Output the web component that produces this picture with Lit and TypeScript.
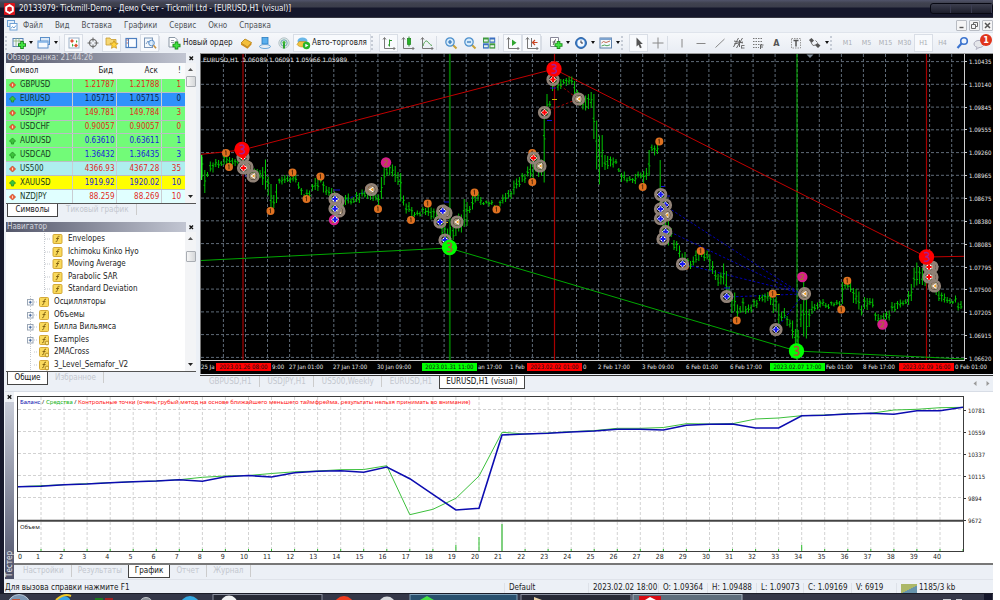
import { LitElement, html, svg, css, nothing } from "lit";
import { customElement, state } from "lit/decorators.js";

/* ---------- price chart data ---------- */

// x, high, low of the price swings (plot units)
const SWINGS: number[][] = [
  [202,158,178],[204,170,193],[208,171,176],[212,162,172],[216,160,168],[222,160,165],[226,154,165],[232,158,165],[237,158,165],
  [243,150,162],[247,160,172],[252,168,178],[258,170,178],[262,166,184],[265,160,190],[268,176,195],[270,185,210],[273,195,208],
  [276,183,202],[279,179,184],[284,176,184],[290,176,182],[294,174,182],[298,183,190],[301,188,195],[304,193,200],[309,190,197],
  [313,185,192],[316,178,190],[320,176,183],[323,181,192],[327,187,196],[331,187,212],[335,192,215],[338,196,215],[342,200,207],
  [347,194,204],[354,198,204],[358,192,202],[362,190,197],[368,192,200],[372,186,200],[376,195,201],[378,194,208],[381,178,200],
  [384,164,185],[387,164,175],[391,164,176],[394,167,183],[398,172,185],[401,172,200],[404,196,206],[408,203,213],[411,207,218],
  [415,211,216],[420,211,216],[424,208,215],[428,205,215],[431,208,220],[434,208,218],[437,212,222],[440,213,228],[443,222,235],
  [446,225,238],[449,228,247],[452,224,240],[456,222,235],[460,214,232],[463,200,228],[466,202,226],[469,205,212],[472,195,210],
  [476,193,202],[480,197,205],[484,201,204],[490,201,206],[496,205,209],[500,201,207],[505,194,203],[510,190,198],[514,181,195],
  [519,178,188],[523,173,182],[527,167,177],[530,163,177],[532,154,182],[536,155,172],[540,160,176],[543,115,182],[546,95,118],
  [549,101,107],[551,103,108],[554,72,90],[556,78,85],[560,80,90],[564,79,84],[568,77,85],[572,76,84],[575,82,98],[578,90,97],
  [581,95,105],[584,98,110],[587,95,110],[590,92,108],[593,93,138],[596,121,170],[599,135,184],[602,136,168],[605,155,170],
  [608,155,168],[612,157,167],[616,160,165],[620,168,172],[623,172,181],[628,177,182],[632,178,183],[636,173,183],[640,172,178],
  [643,172,187],[646,168,180],[649,149,175],[653,145,152],[656,145,155],[659,140,160],[661,160,215],[664,195,235],[668,218,245],
  [671,229,238],[675,240,250],[679,246,258],[683,253,268],[687,258,265],[691,260,268],[694,257,266],[698,250,262],[702,250,257],
  [706,251,260],[710,254,270],[713,262,275],[716,270,280],[719,273,285],[723,263,284],[727,272,298],[730,286,300],[733,293,312],
  [737,304,318],[740,307,314],[743,298,312],[747,305,313],[751,304,312],[755,300,308],[759,294,300],[763,295,302],[767,293,302],
  [771,290,305],[775,297,312],[778,303,327],[781,313,322],[784,308,318],[787,315,325],[790,320,328],[793,320,338],[797,330,350],
  [800,303,326],[803,280,337],[806,292,338],[808,310,328],[811,301,314],[815,303,310],[820,300,307],[826,303,308],[832,302,306],
  [838,301,306],[842,281,303],[845,278,290],[848,282,288],[851,283,293],[855,288,303],[859,292,310],[862,305,315],[866,298,310],
  [869,297,304],[873,299,308],[876,312,320],[880,315,325],[886,312,320],[890,310,320],[893,303,312],[898,300,308],[904,300,305],
  [908,291,305],[911,283,300],[915,268,288],[918,262,285],[921,268,285],[925,260,285],[928,260,282],[932,275,290],[936,280,295],
  [939,290,300],[943,293,302],[948,298,304],[952,300,303],[956,296,303],[960,302,310],[964,307,315],
];
const PX = 201, PW = 763;

function barsPath(): string {
  let d = "";
  let s = 0;
  const n = Math.floor((PW - 2) / 2.76);
  for (let i = 0; i <= n; i++) {
    const x = PX + 1 + i * 2.76;
    while (s < SWINGS.length - 2 && SWINGS[s + 1][0] < x) s++;
    const a = SWINGS[s], b = SWINGS[s + 1];
    const near = Math.abs(a[0] - x) <= Math.abs(b[0] - x) ? a : b;
    const j = ((i * 7) % 5) - 2;
    const hi = near[1] + j * 0.5, lo = near[2] + j * 0.5;
    const rx = x.toFixed(1);
    const o = hi + (lo - hi) * (0.3 + ((i * 3) % 4) * 0.12);
    const c = hi + (lo - hi) * (0.35 + ((i * 5) % 4) * 0.13);
    d += `M${rx} ${hi.toFixed(1)}V${lo.toFixed(1)}M${(x - 1.3).toFixed(1)} ${o.toFixed(1)}H${rx}M${rx} ${c.toFixed(1)}h1.3`;
  }
  return d;
}
const BARS = barsPath();

const ORANGE = [[226,153],[229,167],[270.5,211],[292.5,172.5],[306.5,199],[320.5,176.5],[369,189],[378,209],[411,220],[427.7,203.5],
  [474.5,192.5],[496.5,209.5],[532.3,153],[532.3,182],[642.7,187],[659.3,141.5],[685,266],[700.7,251],[736.7,320.5],[772.7,293.7],
  [841.3,309.5],[847.3,280.7]];
const PINK = [[386,162.5],[334,220],[802.3,277],[882.5,324.5]];
const DEALS: [number, number, string][] = [
  [243,157,"r"],[247,167,"o"],[243.5,168,"r"],[253,176,"o"],[338,201,"o"],[335,199,"b"],[339,211,"o"],[335,208.7,"b"],[335,219.5,"p"],
  [371.5,189.5,"o"],[446,213,"o"],[442.7,211,"b"],[440,222,"b"],[457,222,"o"],[445,240,"b"],
  [553,79.5,"r"],[578.5,99,"o"],[544.5,112.5,"r"],[533.5,158,"r"],[540,166,"o"],[660.7,194.5,"b"],[666.5,215,"o"],[665.5,205,"b"],
  [660.5,209,"b"],[660.5,218.7,"b"],[665.7,231.7,"b"],[663,239,"b"],[682.5,264,"b"],[726.7,296.5,"b"],[776,329.5,"b"],
  [804.5,293.7,"o"],[932,267,"o"],[929,267,"r"],[932,277,"o"],[929,277,"r"],[934.5,286,"o"]];
const PEAKS: [number, number, string][] = [[242,149.5,"#f00"],[554,69,"#f00"],[926.5,257,"#f00"],[449.5,247.5,"#0f0"],[796.5,351,"#0f0"]];

const PRICES = ["1.10435","1.10140","1.09845","1.09555","1.09260","1.08965","1.08675","1.08380","1.08085","1.07795","1.07500","1.07205","1.06915","1.06620"];
// axis captions; those beside a date flag carry only the part that stays free
const TIMES: [number, string][] = [[201,"25 Ja"],[272,"9:00"],[289,"27 Jan 01:00"],[333,"27 Jan 17:00"],[377,"30 Jan 09:00"],[478,"an 17:00"],[510,"1 Feb"],[583,"0"],[598,"2 Feb 17:00"],[642,"3 Feb 09:00"],[686,"6 Feb 01:00"],[730,"6 Feb 17:00"],[826,"Feb 01:00"],[863,"8 Feb 17:00"],[955,"0 Feb 01:00"]];
const FLAGS: [number, string, string][] = [[216,"2023.01.26 08:00","red"],[422,"2023.01.31 11:00","green"],[527,"2023.02.02 01:00","red"],[770,"2023.02.07 17:00","green"],[899,"2023.02.09 16:00","red"]];

/* ---------- tester data ---------- */
const BALANCE = [486.7,486.3,484.7,484,482.7,481.7,481,479.7,481.3,476.7,475.5,477,472.7,471.3,470.7,472.3,467,478.7,494.3,510,508.3,435,434,433.3,432,431,429.3,429.2,430,425.3,424.3,424,428,428,415.7,415.3,414,413.3,414.3,410.7,410.7,407.3];
const EQUITY = [486.7,485.7,484.7,483.7,482.7,481.7,481,479.7,477.3,476,475.5,473.5,471.8,471,469.7,469.5,465.7,514.7,509.3,498.3,476,432.3,434,433,431.6,430.6,428.3,428.3,427.5,423.7,424,423.7,419,418,415.7,415,413.8,413.3,410,409.3,407.7,407.3];
const VOLUME: Record<number, number> = { 19: 6, 20: 14, 21: 27, 34: 6 };

/* ---------- icons (18 x 16 boxes) ---------- */
const plus = (x: number, y: number) => svg`<path d="M${x} ${y - 4}v8M${x - 4} ${y}h8" stroke="#1c8a1c" stroke-width="3.6"/><path d="M${x} ${y - 3}v6M${x - 3} ${y}h6" stroke="#3fe03f" stroke-width="2"/>`;
const axes = svg`<path d="M4.500 3v10.500H15M3 4.500l1.500-2 1.500 2M13.500 12l1.500 1.500-1.500 1.500" fill="none" stroke="#777" stroke-width="1"/>`;
const ICONS: Record<string, unknown> = {
  newchart: svg`<rect x="3" y="3.500" width="10" height="8" fill="#eef5fb" stroke="#5b83b5"/><path d="M3 6h10M6 3v9M9 3v9" stroke="#8ab07a" stroke-width=".8"/>${plus(12, 10)}`,
  profiles: svg`<rect x="5.500" y="2.500" width="9" height="7" fill="#dbe9f8" stroke="#5b8fc9"/><rect x="3" y="6" width="10" height="7" fill="#f5faff" stroke="#5b8fc9"/><path d="M3 7h10" stroke="#7fb0e6" stroke-width="1.500"/>`,
  watch: svg`<rect x="4" y="3" width="10" height="10" fill="#fff" stroke="#9bb0c8"/><path d="M7 4l2 2-2 2-2-2zM11 8.500l2 2-2 2-2-2z" fill="#e05030"/><path d="M7 8.500l1.700 1.700L7 12M11 5l1.500 1.500L11 8" fill="#38b038"/>`,
  target: svg`<circle cx="9" cy="8" r="3.600" fill="none" stroke="#777" stroke-width="1.200"/><path d="M9 2.500v4M9 9.500v4M3.500 8h4M10.500 8h4" stroke="#666"/>`,
  nav: svg`<path d="M3 3h4l1 1.500h5V10H3z" fill="#f6d774" stroke="#c59b2e" stroke-width=".8"/><path d="M11 5.500l1.200 2.600 2.800.3-2 2 .5 2.900-2.500-1.400-2.500 1.400.5-2.900-2-2 2.800-.3z" fill="#ffd23c" stroke="#c08d12" stroke-width=".7"/>`,
  terminal: svg`<rect x="4" y="3.500" width="10.500" height="9" fill="#fbfdff" stroke="#4d7fc0" stroke-width="1.200"/><path d="M6.500 4v8" stroke="#4d7fc0"/><path d="M4.500 5h2M4.500 8h1.500" stroke="#d05040" stroke-width=".8"/>`,
  tester: svg`<rect x="3.500" y="3" width="8" height="9.500" fill="#f4f8fc" stroke="#7d97b8"/><path d="M5 9l2-3 1.500 2L10 5" fill="none" stroke="#5b83b5" stroke-width=".8"/><circle cx="10.500" cy="8" r="2.800" fill="#d9ecfb" fill-opacity=".8" stroke="#5b8fc9"/><path d="M12.500 10.200l2.500 3" stroke="#c59040" stroke-width="1.600"/>`,
  order: svg`<path d="M4 2.500h6l2 2V12H4z" fill="#fff" stroke="#8a97a5"/><path d="M6 5.500h3M6 7.500h3" stroke="#7d8a98" stroke-width=".8"/>${plus(11.5, 10.5)}`,
  gold: svg`<path d="M4 8l4-4 6.500 3.500-4 4.500z" fill="#f3bf3a" stroke="#b07d10" stroke-width=".8"/><path d="M4 8v1.800l6.500 4V12zM14.500 7.500v2l-4 4.300V12z" fill="#cf8d18"/>`,
  account: svg`<rect x="6" y="2.500" width="6" height="6.500" fill="#5ab0ee" stroke="#2a7dc0" stroke-width=".8"/><ellipse cx="9" cy="11.500" rx="5.500" ry="2" fill="#e7edf3" stroke="#5b9fd6" stroke-width=".9"/>`,
  signal: svg`<circle cx="9" cy="8" r="5.200" fill="#dfe8e4" stroke="#b7c6cb"/><circle cx="9" cy="8" r="3.200" fill="none" stroke="#6fa9b8"/><path d="M9 8v5.500" stroke="#2da52d" stroke-width="2"/><circle cx="9" cy="7.500" r="1.500" fill="#38b838"/>`,
  auto: svg`<ellipse cx="8.500" cy="6" rx="5" ry="3.500" fill="#69b7e8"/><path d="M3 9.500c2 3 8 3.500 11 0l-2-3H5z" fill="#f1c33f" stroke="#bb8d1e" stroke-width=".6"/><circle cx="12.500" cy="10.500" r="3.700" fill="#28b428"/><path d="M11.300 8.700l3.200 1.800-3.200 1.800z" fill="#fff"/>`,
  bars: svg`${axes}<path d="M9.500 4.500v7M8 10h1.500M9.500 5.500H12" fill="none" stroke="#2c9a2c"/>`,
  candles: svg`${axes}<path d="M10 1.500v10" stroke="#2c8a2c"/><rect x="8.300" y="3.500" width="3.400" height="6" fill="#27b227" stroke="#1a7d1a" stroke-width=".6"/>`,
  line: svg`${axes}<path d="M5 11c1-4 3-6 4.500-4.500S12 10 14 10.500" fill="none" stroke="#4aa04a"/>`,
  zin: svg`<path d="M10.500 9.500l4 4" stroke="#c8a23a" stroke-width="2"/><circle cx="8" cy="7" r="4.200" fill="#d5ebfb" stroke="#4b8ecb" stroke-width="1.200"/><path d="M8 5v4M6 7h4" stroke="#2a6fb5" stroke-width="1.200"/>`,
  zout: svg`<path d="M10.500 9.500l4 4" stroke="#c8a23a" stroke-width="2"/><circle cx="8" cy="7" r="4.200" fill="#d5ebfb" stroke="#4b8ecb" stroke-width="1.200"/><path d="M6 7h4" stroke="#2a6fb5" stroke-width="1.200"/>`,
  tile: svg`<rect x="3" y="2.500" width="5.800" height="5.300" fill="#3f9a3f"/><rect x="9.400" y="2.500" width="5.800" height="5.300" fill="#3a6fc0"/><rect x="3" y="8.300" width="5.800" height="5.300" fill="#3a6fc0"/><rect x="9.400" y="8.300" width="5.800" height="5.300" fill="#3f9a3f"/><path d="M4 5.500h3.800M10.400 5.500h3.800M4 11.300h3.800M10.400 11.300h3.800" stroke="#e9f4e9" stroke-width="2"/>`,
  shift: svg`${axes}<path d="M8 4.500l4.500 3.300L8 11z" fill="#2fa52f"/>`,
  scroll: svg`${axes}<path d="M8.500 3v9" stroke="#777"/><path d="M14.500 7.500h-5M12 5l-2.500 2.500L12 10" fill="none" stroke="#cc4422" stroke-width="1.200"/>`,
  indic: svg`<path d="M3.500 2.500h8v9h-8z" fill="#fff" stroke="#889"/><path d="M6 10c1 0 1-5.500 3-5.500M5.500 7h3" fill="none" stroke="#555"/>${plus(11.5, 10)}`,
  clock: svg`<circle cx="9" cy="8" r="5.400" fill="#3a7fcf" stroke="#245a9c"/><circle cx="9" cy="8" r="3.700" fill="#f3f9ff"/><path d="M9 5.500V8h2" fill="none" stroke="#334"/>`,
  template: svg`<rect x="3" y="3" width="11.500" height="10" fill="#f5f9fd" stroke="#5d7fa8"/><path d="M3 4h11.500" stroke="#7da3cf" stroke-width="2"/><path d="M4.500 8l2-1.500 2.500 1 4-1.500" fill="none" stroke="#c05a40" stroke-width=".9"/><path d="M4.500 11l3-1 2.500.8 3-1" fill="none" stroke="#3d9a4a" stroke-width=".9"/>`,
  cursor: svg`<path d="M6.500 2.500v9l2-1.800 1.500 3.500 1.700-.8-1.500-3.300h2.600z" fill="#555"/>`,
  cross: svg`<path d="M9 2.500v11M3.500 8h11" stroke="#888"/>`,
  vline: svg`<path d="M9 4v8.500" stroke="#888"/>`,
  hline: svg`<path d="M4.500 8.500h9" stroke="#888"/>`,
  dline: svg`<path d="M4.500 12.500l9-8.500" stroke="#888"/>`,
  pitch: svg`<path d="M3.500 12l5-9M6.500 13l6-10M4 6l9 2M4 9l9-2M9.500 5v7" stroke="#666" fill="none"/><path d="M11.500 10.500h3M11.500 13h3M11.500 10.500v3" stroke="#555" stroke-width=".8"/>`,
  fibo: svg`<path d="M4 3.500h10M4 6.500h10M4 9.500h10M4 12.500h6" stroke="#777" stroke-dasharray="1.500 1"/><path d="M11.500 14v-4h3M11.500 12h2.500" fill="none" stroke="#555" stroke-width=".9"/>`,
  label: svg`<rect x="4.500" y="3.500" width="9" height="9.500" fill="none" stroke="#999" stroke-dasharray="1.500 1"/><path d="M6.500 5.500h5M9 5.500v6" stroke="#555" stroke-width="1.500"/>`,
  arrows: svg`<path d="M3 5l2.500-2L8 5.500 5.500 8zM9 10l2.500-2 3 2.500L12 13z" fill="#555"/><path d="M5 7.500l2 3 3-.5M9.500 5.500l2 2" stroke="#777" fill="none"/>`,
  search: svg`<circle cx="11" cy="6" r="3.300" fill="#eef5fd" stroke="#3c74cf" stroke-width="1.600"/><path d="M8.500 8.500L4.500 13" stroke="#3c74cf" stroke-width="2.200"/>`,
  chat: svg`<ellipse cx="7" cy="9" rx="5" ry="3.600" fill="#e4e6ea" stroke="#aab"/><path d="M5 12l-1 2.500 3.500-2" fill="#d5d8dd" stroke="#aab" stroke-width=".7"/>`,
};

type Tool = { k: string; label: string; t?: string; drop?: boolean; on?: boolean; cls?: string };
const T = (k: string, label: string, o: Partial<Tool> = {}): Tool => ({ k, label, ...o });
const TOOLS: Tool[] = [
  T("grip", ""), T("newchart", "Новый график", { drop: true }), T("profiles", "Профили", { drop: true }), T("sep", ""),
  T("watch", "Обзор рынка", { on: true }), T("target", "Окно данных"), T("nav", "Навигатор", { on: true }), T("terminal", "Терминал"), T("tester", "Тестер стратегий", { on: true }),
  T("sep", ""), T("order", "Новый ордер", { t: "Новый ордер", cls: "wide" }), T("gold", "MetaEditor"), T("account", "MQL5"), T("signal", "Сигналы"),
  T("auto", "Авто-торговля", { t: "Авто-торговля", on: true }), T("grip", "", { cls: "wide" }),
  T("bars", "Бары", { on: true }), T("candles", "Свечи"), T("line", "Линия"), T("sep", ""),
  T("zin", "Увеличить"), T("zout", "Уменьшить"), T("tile", "Упорядочить окна"), T("sep", ""),
  T("shift", "Автопрокрутка", { on: true }), T("scroll", "Сдвиг графика", { on: true }), T("sep", ""),
  T("indic", "Индикаторы", { drop: true }), T("clock", "Периоды", { drop: true }), T("template", "Шаблоны", { drop: true }), T("grip", "", { cls: "wide" }),
  T("cursor", "Курсор", { on: true }), T("cross", "Перекрестие"), T("sep", ""),
  T("vline", "Вертикальная линия"), T("hline", "Горизонтальная линия"), T("dline", "Трендовая линия"), T("pitch", "Канал"), T("fibo", "Фибоначчи"),
  T("txt", "Текст", { t: "A", cls: "letter" }), T("label", "Метка"), T("arrows", "Стрелки", { drop: true }), T("grip", "", { cls: "wide" }),
  ...["M1", "M5", "M15", "M30", "H1", "H4"].map((p) => T("txt", p, { t: p, cls: "period", on: p === "H1" })),
  T("search", "Поиск"), T("chat", "Сообщения"),
];

const QUOTES: [string, string, string, string, string, string, string][] = [
  ["GBPUSD", "1.21787", "1.21788", "1", "down", "green", "red"],
  ["EURUSD", "1.05715", "1.05715", "0", "up", "sel", "dark"],
  ["USDJPY", "149.781", "149.784", "3", "down", "green", "red"],
  ["USDCHF", "0.90057", "0.90057", "0", "down", "green", "red"],
  ["AUDUSD", "0.63610", "0.63611", "1", "up", "green", "blue"],
  ["USDCAD", "1.36432", "1.36435", "3", "up", "green", "blue"],
  ["US500", "4366.93", "4367.28", "35", "down", "teal", "red"],
  ["XAUUSD", "1919.92", "1920.02", "10", "up", "yellow", "blue"],
  ["NZDJPY", "88.259", "88.269", "10", "down", "pale", "red"],
];
const TREE: [string, number, string][] = [
  ["Envelopes", 3, ""], ["Ichimoku Kinko Hyo", 3, ""], ["Moving Average", 3, ""], ["Parabolic SAR", 3, ""], ["Standard Deviation", 3, ""],
  ["Осцилляторы", 2, "+"], ["Объемы", 2, "+"], ["Билла Вильямса", 2, "+"], ["Examples", 2, "+c"], ["2MACross", 2, "c"], ["3_Level_Semafor_V2", 2, "c"],
];

const base = css`
  :host { box-sizing: border-box; }
  *, *::before, *::after { box-sizing: border-box; }
  button { font: inherit; color: inherit; background: none; border: 0; margin: 0; padding: 0; white-space: nowrap; }
  svg { display: block; }
  .caption { flex: none; display: flex; justify-content: space-between; align-items: center; height: 10px; color: #d3d5dd; font-size: 8px; line-height: 10px; background: linear-gradient(90deg, #54576a, #c8ccd8); padding-left: 1px; }
  .caption button { width: 10px; height: 10px; background: #eef1f6; }
  .tabs { flex: none; display: flex; background: #ecf0f6; border-top: 1px solid #555; height: 14px; font-size: 8px; line-height: 12px; color: #c3c7ce; }
  .tabs button.active { background: #fff; color: #111; border: 1px solid #444; border-top: 0; }
`;
const cross = html`<svg width="10" height="10" viewBox="0 0 10 10" aria-hidden="true"><path d="M3.500 3.500l3.500 3.500M7 3.500L3.500 7" stroke="#111" stroke-width="1.400"/></svg>`;

@customElement("tool-strip")
class ToolStrip extends LitElement {
  static styles = [base, css`
    :host { display: flex; flex: none; height: 20px; align-items: center; background: linear-gradient(#f6f8fb, #e9edf4); border-top: 1px solid #dfe4ec; font-size: 8px; }
    .grip { flex: none; width: 4px; height: 14px; border-left: 2px dotted #c6ccd6; }
    .grip.wide { width: 8px; }
    .sep { flex: none; width: 5px; height: 14px; border-left: 1px solid #d8dde5; }
    .tool { flex: none; width: 19px; height: 18px; display: flex; align-items: center; justify-content: center; border: 1px solid transparent; color: #222; }
    .tool svg { flex: none; }
    .drop { width: 25px; justify-content: flex-start; }
    .on { background: #f8fafd; border-color: #d9dee6; }
    .order { width: 72px; justify-content: flex-start; }
    .auto { width: 78px; justify-content: flex-start; }
    .letter { font-weight: bold; color: #555; font-size: 9px; }
    .period { color: #a9adb3; font-size: 7px; }
    .arrow { border: 2px solid transparent; border-top: 3px solid #111; border-bottom: 0; margin-left: 1px; }
    .chat { position: relative; }
    .badge { position: absolute; left: 8px; top: -1px; width: 12px; height: 12px; border-radius: 6px; background: #e0351c; color: #fff; font-weight: bold; font-size: 9px; line-height: 12px; text-align: center; }
  `];
  render() {
    return TOOLS.map((t) => {
      if (t.k === "grip" || t.k === "sep") return html`<span class="${t.k} ${t.cls ?? ""}"></span>`;
      const cls = ["tool", t.k, t.cls, t.drop && "drop", t.on && "on"].filter(Boolean).join(" ");
      return html`<button class=${cls} aria-label=${t.label} title=${t.label}>
        ${t.k !== "txt" ? html`<svg width="18" height="16" viewBox="0 0 18 16" aria-hidden="true">${ICONS[t.k]}</svg>` : nothing}${t.t ?? nothing}${t.drop ? html`<span class="arrow"></span>` : nothing}${t.k === "chat" ? html`<span class="badge">1</span>` : nothing}
      </button>`;
    });
  }
}

@customElement("market-watch")
class MarketWatch extends LitElement {
  static styles = [base, css`
    :host { display: flex; flex-direction: column; font-size: 8px; flex: none; height: 164px; }
    .body { display: flex; height: 141px; overflow: hidden; background: #fff; }
    .list { flex: 1; height: 141px; border-collapse: collapse; table-layout: fixed; line-height: 10px; }
    th { height: 16px; font-weight: normal; text-align: right; padding: 0 4px 0 0; background: #fafbfc; color: #222; }
    th:first-child { text-align: left; padding-left: 4px; }
    td { text-align: right; padding: 0 2px 0 0; border-left: 1px solid #c9cdd2; border-bottom: 1px solid #b9bec4; }
    td:last-child, th:last-child { padding-right: 4px; }
    .red td { color: #e02a1c; } .blue td { color: #1a22d8; } .dark td { color: #10243c; }
    .list td:first-child { border-left: 0; text-align: left; color: #173a1f; }
    .name { display: flex; align-items: center; gap: 4px; padding-left: 3px; }
    .c1 { width: 37%; } .c4 { width: 13%; }
    .green { background: #72fb78; } .sel { background: #2f92fb; } .teal { background: #aeeeee; } .yellow { background: #ff0; } .pale { background: #e0ffff; }
    .bar { width: 11px; flex: none; background: #f3f4f6; display: flex; flex-direction: column; align-items: center; padding-top: 5px; }
    .thumb { width: 10px; height: 11px; margin-top: 5px; border: 1px solid #a9adb3; border-radius: 1px; background: linear-gradient(90deg, #f6f6f6, #d6d8da); }
    .dn { margin-top: auto; margin-bottom: 5px; }
    .tabs { padding-left: 1px; gap: 8px; }
    .tabs .active { width: 51px; height: 13px; }
    .tabs .idle { border-right: 1px solid #ccc; padding-right: 7px; height: 11px; }
  `];
  render() {
    return html`
      <div class="caption"><span>Обзор рынка: 21:44:26</span><button aria-label="Закрыть">${cross}</button></div>
      <div class="body">
        <table class="list">
          <thead><tr><th class="c1">Символ</th><th>Бид</th><th>Аск</th><th class="c4">!</th></tr></thead>
          <tbody>${QUOTES.map(([s, b, a, d, dir, bg, fg]) => html`<tr class="${bg} ${fg}">
            <td><span class="name"><svg width="7" height="8" viewBox="0 0 8 8" aria-hidden="true">${dir === "up"
              ? svg`<path d="M4 .5L7.500 4 6 5.500H5.200V7.500H2.800V5.500H2L.5 4z" fill="#3cc43c" stroke="#187818" stroke-width=".7"/>`
              : svg`<path d="M4 7.500L7.500 4 4 .5.5 4z" fill="#f0643c" stroke="#b83214" stroke-width=".7"/><path d="M4 2.500v3" stroke="#fff" stroke-width=".8"/>`}</svg>${s}</span></td>
            <td>${b}</td><td>${a}</td><td>${d}</td></tr>`)}</tbody>
        </table>
        <div class="bar" aria-hidden="true">
          <svg width="5" height="3" viewBox="0 0 5 3"><path d="M0 3L2.500 0 5 3z" fill="#555"/></svg>
          <span class="thumb"></span>
          <svg class="dn" width="5" height="3" viewBox="0 0 5 3"><path d="M0 0L2.500 3 5 0z" fill="#222"/></svg>
        </div>
      </div>
      <div class="tabs"><button class="active">Символы</button><button class="idle">Тиковый график</button></div>`;
  }
}

@customElement("nav-tree")
class NavTree extends LitElement {
  static styles = [base, css`
    :host { display: flex; flex-direction: column; font-size: 8px; flex: none; height: 163px; margin-top: 5px; }
    .body { display: flex; height: 139px; overflow: hidden; background: #fff; }
    .tree { flex: 1; margin: 0; padding: 1px 0 0 0; list-style: none; display: grid; grid-auto-rows: 1fr; }
    li { display: flex; align-items: center; gap: 5px; color: #1c1c1c; line-height: 12px; min-height: 0; }
    .d3 { padding-left: 37px; } .d2 { padding-left: 20px; }
    .bar { width: 11px; flex: none; background: #f3f4f6; display: flex; flex-direction: column; align-items: center; padding-top: 5px; }
    .thumb { width: 10px; height: 11px; margin-top: 11px; border: 1px solid #a9adb3; border-radius: 1px; background: linear-gradient(90deg, #f6f6f6, #d6d8da); }
    .dn { margin-top: auto; margin-bottom: 5px; }
    .tabs { padding-left: 1px; gap: 7px; }
    .tabs .active { width: 41px; height: 13px; }
    .tabs .idle { border-right: 1px solid #ccc; padding-right: 7px; height: 11px; }
  `];
  render() {
    return html`
      <div class="caption"><span>Навигатор</span><button aria-label="Закрыть">${cross}</button></div>
      <div class="body">
        <ul class="tree">${TREE.map(([name, depth, kind]) => html`<li class="d${depth}">
          ${depth === 3
            ? html`<svg width="20" height="12" viewBox="0 0 20 12" aria-hidden="true"><path d="M1.500 0v12M2 6h6" stroke="#c4c8ce" stroke-dasharray="1 1"/>${this.leaf(9, false)}</svg>`
            : html`<svg width="23" height="12" viewBox="0 0 23 12" aria-hidden="true"><path d="M4.500 0v12M8 6h4" stroke="#c4c8ce" stroke-dasharray="1 1"/>${kind.includes("+") ? svg`<rect x="1.500" y="3.500" width="5.500" height="5.500" fill="#fff" stroke="#9aa6b5"/><path d="M2.800 6.200h3M4.300 4.800v3" stroke="#345a94" stroke-width=".9"/>` : nothing}${this.leaf(12.5, kind.includes("c"))}</svg>`}
          <span>${name}</span></li>`)}</ul>
        <div class="bar" aria-hidden="true">
          <svg width="5" height="3" viewBox="0 0 5 3"><path d="M0 3L2.500 0 5 3z" fill="#555"/></svg>
          <span class="thumb"></span>
          <svg class="dn" width="5" height="3" viewBox="0 0 5 3"><path d="M0 0L2.500 3 5 0z" fill="#222"/></svg>
        </div>
      </div>
      <div class="tabs"><button class="active">Общие</button><button class="idle">Избранное</button></div>`;
  }
  private leaf(x: number, custom: boolean) {
    return svg`<rect x=${x + 1} y="1.500" width="9" height="9" rx="1" fill="#f9d95c" stroke="#cfa22a" stroke-width=".9"/>
      <path d="M${x + 7.5} 3.300c-1.800-.6-1.700 1-2 2.700s-.5 3.200-1.800 2.700M${x + 4} 5.500h3" fill="none" stroke="#7c5c10" stroke-width=".9"/>
      ${custom ? svg`<circle cx=${x + 8.5} cy="9" r="1.900" fill="#ffe98a" stroke="#ad8418" stroke-width=".9"/>` : nothing}`;
  }
}

@customElement("price-chart")
class PriceChart extends LitElement {
  static styles = [base, css`
    :host { display: flex; flex-direction: column; flex: 1; min-width: 0; background: #ecf0f6; }
    .frame { background: #000; border-top: 1px solid #9a9a9a; border-left: 1px solid #777; margin-top: 1px; height: 321px; display: grid; grid-template: 307px 1fr / minmax(0, 1fr) 28px; color: #e8e8e8; font-family: "DejaVu Sans Condensed", "DejaVu Sans", sans-serif; font-size: 6px; }
    .plot { position: relative; border: 1px solid #cfcfcf; border-left: 0; border-top: 0; min-width: 0; }
    .plot svg { width: 100%; height: 100%; }
    .head { position: absolute; left: 2px; top: 2px; line-height: 8px; font-family: "DejaVu Sans", sans-serif; font-size: 6px; white-space: pre; }
    .prices { display: grid; grid-auto-rows: 1fr; padding: 0; margin: -4px 0 -9px; }
    .prices span { display: flex; align-items: center; }
    .prices span::before { content: ""; width: 2px; height: 1px; background: #ccc; margin-right: 2px; }
    .times { position: relative; grid-column: 1 / 3; overflow: hidden; }
    .time { position: absolute; top: 2px; line-height: 8px; white-space: nowrap; }
    .flag { position: absolute; top: 2px; height: 8px; width: 55px; text-align: center; line-height: 8px; color: #111; white-space: nowrap; }
    .flag.red { background: #f00; } .flag.green { background: #0f0; }
    .tabs { margin-top: 1px; border-top: 1px solid #333; height: 15px; line-height: 12px; color: #c3c7ce; padding-left: 1px; }
    .tabs button { padding: 0 7px 0 8px; }
    .tabs button.idle { border-right: 1px solid #ccc; height: 11px; }
    .tabs button.last { border-right: 0; }
    .tabs button.active { height: 13px; padding: 0 6px; }
    .scroll { margin-left: auto; display: flex; gap: 9px; align-items: center; padding-right: 3px; }
  `];
  render() {
    const gx = Array.from({ length: 34 }, (_, i) => 223.4 + i * 22.07);
    const gy = PRICES.map((_, i) => 61.6 + i * 22.75);
    const pct = (x: number) => `left:${(((x - 201) / 792) * 100).toFixed(2)}%`;
    return html`
      <div class="frame">
        <div class="plot">
          <svg viewBox="201 54 763 306" preserveAspectRatio="none" role="img" aria-label="EURUSD,H1">
            <g stroke="#5f6b78" stroke-width="1" stroke-dasharray="3 2" fill="none">
              ${gx.map((x) => svg`<path d="M${x.toFixed(1)} 54V360"/>`)}
              ${gy.map((y) => svg`<path d="M201 ${y.toFixed(1)}H964"/>`)}
            </g>
            <path d="M243 54V360M554.500 54V360M926.500 54V360" stroke="#a80000" stroke-width="1.200"/>
            <path d="M449.800 54V360" stroke="#007000" stroke-width="1.800"/>
            <path d="M797 54V360" stroke="#00b000" stroke-width="1"/>
            <path d="M201 154.300L242 150 554 69l372.500 188 37.500-.7" fill="none" stroke="#c00000"/>
            <path d="M201 260.500L449 248l347.500 103L964 359" fill="none" stroke="#00a800"/>
            <g fill="none" stroke="#0000b4" stroke-dasharray="2.500 2">
              <path d="M664 205L797 291M666 230L797 292M683 264l118 29M727 297l75-3M776 329l28-35M338 203l33-14"/>
            </g>
            <path d="M553 80l25 19M545 112l33-13" stroke="#a00000" stroke-dasharray="2.500 2" fill="none"/>
            <path d=${BARS} stroke="#00c400" stroke-width="1" fill="none"/>
            <path d="M201.500 155v25" stroke="#3f3" stroke-width="1.500"/>
            <path d="M334 190h6M444 202h5M550 88h6M547 120.500h5M661 186.500h4M666 196h4M245 176h4M724 288h6" stroke="#1010d0"/>
            <path d="M552 99.500h5M776 294.500h4M443 222.500h5" stroke="#c8b400"/>
            ${ORANGE.map(([x, y]) => svg`<circle cx=${x} cy=${y} r="4" fill="#df7120"/><path d="M${x - 1} ${y - 1.5}l1-.8v4.500" fill="none" stroke="#4a2408" stroke-width=".9"/>`)}
            ${PINK.map(([x, y]) => svg`<circle cx=${x} cy=${y} r="5.200" fill="#d81e8c"/><path d="M${x - 1.7} ${y - 1.5}c.5-1.800 3.300-1.500 3 .3-.2 1.500-2 2.200-3 3.700h3.500" fill="none" stroke="#a8653c" stroke-width="1.200"/>`)}
            ${DEALS.map(([x, y, k]) => svg`
              ${k === "p" ? nothing : svg`<circle cx=${x} cy=${y} r="5.200" fill="#3a2f28" fill-opacity=".35" stroke="#918277" stroke-width="2.800"/>`}
              ${k === "o"
                ? svg`<circle cx=${x} cy=${y} r="3.600" fill="#a08a70"/><path d="M${x - 2.6} ${y}l4.400-3v6z" fill="#fff"/><path d="M${x - 1} ${y}l2.500-1.800v3.600z" fill="#f0a020"/>`
                : svg`<path d="M${x} ${y - 3.8}l3.800 3.800-3.800 3.800-3.800-3.800z" fill="#fff"/><path d="M${x} ${y - 2.7}v5.400M${x - 2.7} ${y}h5.400" stroke=${k === "r" ? "#f00" : "#1414f0"} stroke-width="2"/>`}`)}
            ${PEAKS.map(([x, y, c]) => svg`<circle cx=${x} cy=${y} r="7.700" fill=${c}/><path d="M${x - 2.5} ${y - 4}c5-1.500 6.500 3 1.200 3.700 5.700.3 4.500 5.800-1.400 4.200" fill="none" stroke=${c === "#f00" ? "#a81e90" : "#b0503c"} stroke-width="1.500"/>`)}
            <path d="M806.500 54.500h7l-3.500 3.500z" fill="#7b8794"/>
          </svg>
          <span class="head">EURUSD,H1  1.06089 1.06091 1.05966 1.05989</span>
        </div>
        <div class="prices">${PRICES.map((p) => html`<span>${p}</span>`)}</div>
        <div class="times">
          ${TIMES.map(([x, t]) => html`<span class="time" style=${pct(x)}>${t}</span>`)}
          ${FLAGS.map(([x, t, c]) => html`<span class="flag ${c}" style=${pct(x)}>${t}</span>`)}
        </div>
      </div>
      <div class="tabs">
        <button class="idle">GBPUSD,H1</button><button class="idle">USDJPY,H1</button><button class="idle">US500,Weekly</button><button class="idle last">EURUSD,H1</button><button class="active">EURUSD,H1 (visual)</button>
        <span class="scroll" aria-hidden="true"><svg width="4" height="5" viewBox="0 0 4 5"><path d="M3.500 0v5L.5 2.500z" fill="#999"/></svg><svg width="4" height="5" viewBox="0 0 4 5"><path d="M.5 0v5l3-2.500z" fill="#999"/></svg></span>
      </div>`;
  }
}

@customElement("strategy-tester")
class StrategyTester extends LitElement {
  static styles = [base, css`
    :host { display: flex; flex: none; height: 188px; background: #fff; }
    .side { width: 9px; flex: none; display: flex; flex-direction: column; align-items: center; }
    .side button { width: 9px; height: 10px; background: #eef1f6; }
    .name { flex: 1; width: 9px; color: #e6e8ee; font-size: 8px; line-height: 9px; writing-mode: vertical-rl; transform: rotate(180deg); padding-top: 2px; background: linear-gradient(#4c5068, #c8ccd8); }
    .main { flex: 1; min-width: 0; display: flex; flex-direction: column; background: #ecf0f6; }
    .graph { display: grid; background: #fff; grid-template-columns: minmax(0, 1fr) 29px; padding: 4px 0 0 3px; height: 171px; grid-template-rows: 156px 10px; font-family: "DejaVu Sans Condensed", "DejaVu Sans", sans-serif; font-size: 6px; color: #222; }
    .plot { position: relative; border: 1px solid #3c3c3c; min-width: 0; }
    .plot svg { width: 100%; height: 100%; }
    .legend { position: absolute; left: 2px; top: 1px; line-height: 8px; white-space: nowrap; font-family: "Noto Sans", sans-serif; }
    .vol { position: absolute; left: 2px; top: 126px; line-height: 8px; font-family: "Noto Sans", sans-serif; }
    .bal { color: #1010b0; } .eq { color: #18b418; } .ctl { color: #ff1414; }
    .values { display: grid; grid-auto-rows: 1fr; height: 133px; margin-top: 3px; }
    .values span { display: flex; align-items: center; }
    .values span::before { content: ""; width: 2px; height: 1px; background: #333; margin-right: 2px; }
    .nums { display: grid; grid-template-columns: repeat(41, 1fr); text-align: right; line-height: 10px; font-size: 7px; }
    .nums .first { display: flex; justify-content: space-between; padding-left: 1px; }
    .tabs { border-top: 2px solid #777; height: 16px; padding-left: 3px; }
    .tabs button { padding: 0 7px 0 6px; height: 12px; border-right: 1px solid #ccc; }
    .tabs button.pre { border-right: 0; padding-right: 6px; }
    .tabs button.active { padding: 0 6px; height: 13px; border-right: 1px solid #444; }
  `];
  render() {
    const step = 945 / 41;
    const x = (i: number) => (18 + i * step).toFixed(1);
    const line = (v: number[]) => v.map((y, i) => `${x(i)},${y}`).join(" ");
    const cols = Array.from({ length: 41 }, (_, i) => i + 1);
    return html`
      <div class="side"><button aria-label="Закрыть"><svg width="9" height="10" viewBox="0 0 10 10" aria-hidden="true"><path d="M3 3l4 4M7 3L3 7" stroke="#111" stroke-width="1.400"/></svg></button><span class="name">Тестер</span></div>
      <div class="main">
        <div class="graph">
          <div class="plot">
            <svg viewBox="18 397 945 154" preserveAspectRatio="none" role="img" aria-label="Баланс / Средства">
              <g stroke="#d2d2d2" stroke-dasharray="3 2" fill="none">
                ${cols.slice(0, 40).map((i) => svg`<path d="M${x(i)} 397V551"/>`)}
                ${[409.5, 431.5, 453.5, 475.5, 497.5].map((y) => svg`<path d="M18 ${y}H963"/>`)}
              </g>
              <path d="M18 520.800H963" stroke="#444" stroke-width="2"/>
              ${cols.map((i) => svg`<path d="M${x(i)} 551v-${VOLUME[i] ?? 2}" stroke=${i === 21 ? "#7fd07f" : "#2cc02c"} stroke-width=${i === 21 ? 2 : 1}/>`)}
              <polyline points=${line(EQUITY)} fill="none" stroke="#3cc03c"/>
              <polyline points=${line(BALANCE)} fill="none" stroke="#0c0cb0" stroke-width="1.600"/>
            </svg>
            <span class="legend"><span class="bal">Баланс</span> / <span class="eq">Средства</span> / <span class="ctl">Контрольные точки (очень грубый метод на основе ближайшего меньшего таймфрейма, результаты нельзя принимать во внимание)</span></span>
            <span class="vol">Объем</span>
          </div>
          <div class="values">${["10781", "10559", "10337", "10115", "9894", "9672"].map((v) => html`<span>${v}</span>`)}</div>
          <div class="nums">${cols.slice(0, 40).map((i) => i === 1 ? html`<span class="first"><span>0</span><span>1</span></span>` : html`<span>${i}</span>`)}</div>
        </div>
        <div class="tabs"><button>Настройки</button><button class="pre">Результаты</button><button class="active">График</button><button>Отчет</button><button>Журнал</button></div>
      </div>`;
  }
}

@customElement("app-root")
class AppRoot extends LitElement {
  @state() private menu = ["Файл", "Вид", "Вставка", "Графики", "Сервис", "Окно", "Справка"];
  static styles = [base, css`
    :host { display: block; background: #fff; font-family: "DejaVu Sans Condensed", "DejaVu Sans", sans-serif; font-size: 8px; min-height: 100vh; }
    .screen { margin-right: 7px; min-height: 100vh; display: flex; flex-direction: column; background: #ecf0f6; overflow: hidden; }
    .title { flex: none; height: 18px; display: flex; align-items: center; gap: 4px; padding-left: 4px; color: #f2f3f6; background: linear-gradient(#50536a 0, #40424f 3px, #3b3d4b 7px, #15172b 8px, #15172b 17px, #555 18px); }
    .title h1 { margin: 0; font-size: 8px; font-weight: normal; line-height: 12px; }
    .winbtns { margin-left: auto; display: flex; width: 63px; height: 11px; border: 1px solid #070812; border-radius: 3px; background: linear-gradient(#3d3f4e, #1c1e2c); margin-bottom: 2px; }
    .winbtns button { flex: 1; border-right: 1px solid #3b3d52; }
    .inner { border-left: 4px solid #17192c; display: flex; flex-direction: column; padding-left: 1px; flex: none; }
    .menu { display: flex; align-items: center; height: 14px; padding-left: 2px; color: #4e5257; }
    .menu nav { display: flex; gap: 12px; margin-left: 5px; }
    .mdi { margin-left: auto; display: flex; gap: 2px; }
    .mdi button { width: 11px; height: 11px; border: 1px solid #b8bcc3; background: #f4f4f5; border-radius: 1px; }
    .work { display: flex; }
    .dock { width: 190px; flex: none; margin: 1px 4px 0 1px; }
    .tester { border-top: 1px solid #d8dde6; margin-top: 1px; }
    .status { display: flex; height: 14px; align-items: flex-end; color: #222; border-top: 1px solid #dfe3ea; line-height: 10px; }
    .status .help { flex: 1; }
    .status .cell { border-left: 1px solid #dde1e8; padding-left: 4px; white-space: nowrap; }
    .profile { width: 84px; } .date { width: 70px; } .o { width: 49px; } .h { width: 49px; } .l { width: 47px; } .c { width: 48px; } .v { width: 45px; }
    .net { width: 97px; display: flex; gap: 2px; align-items: center; }
    .taskbar { height: 7px; background: #343748; overflow: hidden; margin-top: auto; flex: none; }
  `];
  render() {
    return html`
      <div class="screen">
        <header class="title">
          <svg width="11" height="12" viewBox="0 0 11 12" aria-hidden="true"><rect width="11" height="12" rx="1" fill="#d8141c"/><path d="M5.500 2.200l3.300 2v3.800l-3.300 2-3.300-2V4.200z" fill="none" stroke="#fff" stroke-width="2"/></svg>
          <h1>20133979: Tickmill-Demo - Демо Счет - Tickmill Ltd - [EURUSD,H1 (visual)]</h1>
          <span class="winbtns"><button aria-label="Свернуть"></button><button aria-label="Развернуть"></button><button aria-label="Закрыть"></button></span>
        </header>
        <div class="inner">
          <div class="menu">
            <svg width="11" height="11" viewBox="0 0 11 11" aria-hidden="true"><rect x=".5" y=".5" width="7" height="6" fill="#e3effb" stroke="#6d9fd4"/><rect x="3" y="3.500" width="7" height="6.500" fill="#fff" stroke="#6d9fd4"/><path d="M4 8.500l1.500-2 1.500 1.500 2-2.500" fill="none" stroke="#6d9fd4"/></svg>
            <nav>${this.menu.map((m) => html`<button>${m}</button>`)}</nav>
            <span class="mdi">
              <button aria-label="Свернуть окно"><svg width="9" height="9" viewBox="0 0 9 9"><path d="M2.500 6.500h4" stroke="#555" stroke-width="1.400"/></svg></button>
              <button aria-label="Восстановить окно"><svg width="9" height="9" viewBox="0 0 9 9"><path d="M3.500 3.500v-2h4v4h-2M1.500 3.500h4v4h-4z" fill="none" stroke="#666"/></svg></button>
              <button aria-label="Закрыть окно"><svg width="9" height="9" viewBox="0 0 9 9"><path d="M2 2l5 5M7 2L2 7" stroke="#555" stroke-width="1.500"/></svg></button>
            </span>
          </div>
          <tool-strip></tool-strip>
          <div class="work">
            <div class="dock"><market-watch></market-watch><nav-tree></nav-tree></div>
            <price-chart></price-chart>
          </div>
          <strategy-tester class="tester"></strategy-tester>
          <div class="status">
            <span class="help">Для вызова справки нажмите F1</span>
            <span class="cell profile">Default</span><span class="cell date">2023.02.02 18:00</span><span class="cell o">O: 1.09364</span><span class="cell h">H: 1.09488</span><span class="cell l">L: 1.09073</span><span class="cell c">C: 1.09169</span><span class="cell v">V: 6919</span>
            <span class="cell net"><svg width="16" height="9" viewBox="0 0 16 9" aria-hidden="true"><path d="M1 0v9M3 0v8M5 0v7M7 0v6M9 0v5M11 0v4M13 0v3M15 0v2" stroke="#8a9a1c" stroke-width="1.300"/><path d="M3 9V8M5 9V7M7 9V6M9 9V5M11 9V4M13 9V3M15 9V2" stroke="#2f6d8f" stroke-width="1.400"/></svg>1185/3 kb</span>
          </div>
        </div>
        <footer class="taskbar">
          <svg width="993" height="7" viewBox="0 593 993 7" aria-hidden="true">
            <rect x="0" y="593" width="993" height="1" fill="#1b1d28"/>
            <circle cx="19" cy="606" r="11.500" fill="#7d97b3" stroke="#b9c8d6"/><path d="M12 599h8v2h-8z" fill="#c0583c"/>
            <circle cx="64" cy="603" r="7" fill="#35a3e6"/><path d="M56 600q8-7 15-4" stroke="#f0c828" stroke-width="2" fill="none"/>
            <path d="M95 599h8" stroke="#1c7a1c" stroke-width="2"/><path d="M105 599h8" stroke="#a02020" stroke-width="2"/>
            <circle cx="146" cy="604" r="6.500" fill="#8b9098" stroke="#c4c8cc"/><circle cx="190" cy="606" r="10" fill="#35a8e0"/>
            <rect x="213" y="594.500" width="109" height="8" fill="#262936" stroke="#8a8f9e"/><circle cx="229" cy="604" r="8.500" fill="#eef0f2"/>
            <circle cx="344" cy="606" r="10" fill="#f03c1e"/><circle cx="387" cy="605" r="8.500" fill="#d5d8dc"/>
            <rect x="410" y="594.500" width="107" height="8" fill="#28506e" stroke="#7fa0b8"/><path d="M420 600l7-4 7 4z" fill="#46e046"/>
            <rect x="521" y="594.500" width="110" height="8" fill="#262936" stroke="#8a8f9e"/><path d="M534 597l8 3h-8z" fill="#e8d2a8"/>
            <rect x="633" y="594.500" width="109" height="8" fill="#5d6d7c" stroke="#a8b4bf"/><path d="M639 596h22v5h-22z" fill="#d80c14"/><path d="M645 600l5-3 6 3z" fill="#fff"/>
            <path d="M943 599.500h8M956 599.500h6" stroke="#c8ccd2"/><rect x="984" y="594" width="8" height="6" fill="#14162a"/>
          </svg>
        </footer>
      </div>`;
  }
}
